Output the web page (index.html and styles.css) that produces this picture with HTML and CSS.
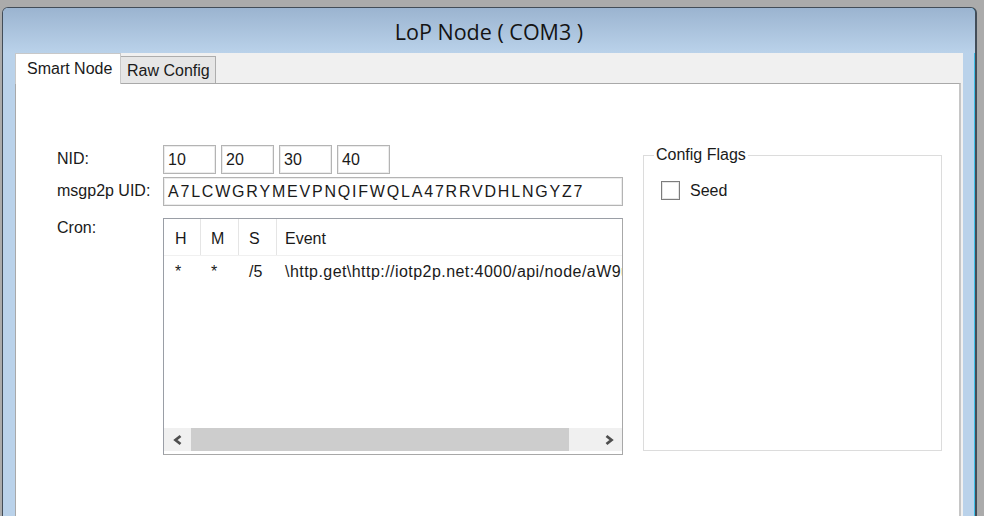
FILE: index.html
```
<!DOCTYPE html>
<html>
<head>
<meta charset="utf-8">
<link rel="stylesheet" href="styles.css">
</head>
<body>
<div class="window">
  <div class="titlebar"><span class="title">LoP Node ( COM3 )</span></div>
  <div class="client">
    <div class="tabs">
      <div class="tab tab-active">Smart Node</div>
      <div class="tab tab-idle">Raw Config</div>
    </div>
    <div class="page">
      <div class="form">
        <div class="lbl">NID:</div>
        <div class="nid">
          <div class="tb tb-nid">10</div>
          <div class="tb tb-nid">20</div>
          <div class="tb tb-nid">30</div>
          <div class="tb tb-nid">40</div>
        </div>
        <div class="lbl">msgp2p UID:</div>
        <div class="tb tb-uid">A7LCWGRYMEVPNQIFWQLA47RRVDHLNGYZ7</div>
        <div class="lbl lbl-cron">Cron:</div>
        <div class="list">
          <div class="lv-head">
            <div class="col col-h">H</div>
            <div class="col col-m">M</div>
            <div class="col col-s">S</div>
            <div class="col col-e">Event</div>
          </div>
          <div class="lv-row">
            <div class="col col-h cell">*</div>
            <div class="col col-m cell">*</div>
            <div class="col col-s cell">/5</div>
            <div class="col col-e cell cell-event">\http.get\http://iotp2p.net:4000/api/node/aW9ub2RlL2xvcA</div>
          </div>
          <div class="lv-fill"></div>
          <div class="hscroll">
            <div class="sb-btn">
              <svg width="12" height="12" viewBox="0 0 12 12"><polyline points="8.5,2 3.5,6 8.5,10" fill="none" stroke="#4e4e4e" stroke-width="2.8"/></svg>
            </div>
            <div class="sb-track"><div class="sb-thumb"></div></div>
            <div class="sb-btn">
              <svg width="12" height="12" viewBox="0 0 12 12"><polyline points="3.5,2 8.5,6 3.5,10" fill="none" stroke="#4e4e4e" stroke-width="2.8"/></svg>
            </div>
          </div>
        </div>
      </div>
      <fieldset class="group">
        <legend class="group-caption">Config Flags</legend>
        <div class="check"><span class="check-box"></span><span>Seed</span></div>
      </fieldset>
    </div>
  </div>
</div>
</body>
</html>
```
FILE: styles.css
```
html, body {
  margin: 0;
  padding: 0;
}
body {
  width: 984px;
  height: 516px;
  overflow: hidden;
  background: #ababab;
  font-family: "Liberation Sans", Arial, sans-serif;
  font-size: 16px;
  color: #1a1a1a;
}
.window {
  box-sizing: border-box;
  margin: 7px 0 0 2px;
  width: 975px;
  height: 530px;
  border: 1px solid #434d58;
  border-right-width: 2px;
  border-radius: 6px 6px 0 0;
  background: #bad2ea;
  box-shadow: inset -1px 0 0 #3fbfe8;
  display: flex;
  flex-direction: column;
}
.titlebar {
  height: 45px;
  flex: none;
  border-radius: 5px 5px 0 0;
  background: linear-gradient(#9bb4d0, #bad2ea);
  display: flex;
  align-items: center;
  justify-content: center;
}
.title {
  font-family: "Open Sans", "Noto Sans", sans-serif;
  font-size: 21.5px;
  color: #141414;
  padding-top: 2px;
}
.client {
  margin: 0 12px 0 12px;
  width: 948px;
  flex: 1;
  background: #f0f0f0;
}
.tabs {
  display: flex;
  align-items: flex-end;
  height: 30px;
  position: relative;
  z-index: 1;
}
.tab {
  box-sizing: border-box;
  white-space: nowrap;
}
.tab-active {
  width: 106px;
  height: 31px;
  margin-bottom: -1px;
  background: #fff;
  border: 1px solid #c8c8c8;
  border-bottom: none;
  padding: 6px 0 0 11px;
}
.tab-idle {
  width: 95px;
  height: 27px;
  background: #e6e6e6;
  border: 1px solid #adadad;
  border-bottom: none;
  border-left: none;
  padding: 5px 0 0 6px;
}
.page {
  box-sizing: border-box;
  width: 946px;
  height: 450px;
  background: #fff;
  border: 1px solid #a9a9a9;
  border-right: 2px solid #c6c6c6;
  padding: 61px 0 0 41px;
  display: flex;
  align-items: flex-start;
}
.form {
  display: grid;
  grid-template-columns: 106px 460px;
  grid-template-rows: 29px 29px auto;
  row-gap: 3px;
}
.lbl {
  display: flex;
  align-items: center;
  white-space: nowrap;
  padding-bottom: 2px;
}
.lbl-cron {
  align-items: flex-start;
  padding-top: 10px;
}
.nid {
  display: flex;
  gap: 5px;
}
.tb {
  box-sizing: border-box;
  height: 29px;
  border: 1px solid #b4b4b4;
  box-shadow: inset 0 0 0 1px #ececec;
  padding: 0 0 0 4px;
  display: flex;
  align-items: center;
  white-space: nowrap;
  overflow: hidden;
}
.tb-nid {
  width: 53px;
}
.tb-uid {
  width: 460px;
  letter-spacing: 1.8px;
}
.list {
  margin-top: 9px;
  box-sizing: border-box;
  width: 460px;
  height: 237px;
  border: 1px solid #9a9ea6;
  border-right-color: #a8a8a8;
  border-bottom-color: #a8a8a8;
  display: flex;
  flex-direction: column;
  overflow: hidden;
}
.lv-head {
  height: 37px;
  flex: none;
  display: flex;
  border-bottom: 1px solid #f0f0f0;
  box-sizing: border-box;
}
.lv-row {
  height: 28px;
  flex: none;
  display: flex;
}
.col {
  box-sizing: border-box;
  flex: none;
  display: flex;
  align-items: center;
  white-space: nowrap;
  overflow: hidden;
}
.lv-head .col {
  border-right: 1px solid #e5e5e5;
  padding-top: 3px;
}
.lv-head .col-e {
  border-right: none;
}
.col-h { width: 37px; padding-left: 11px; }
.col-m { width: 38px; padding-left: 10px; }
.col-s { width: 38px; padding-left: 10px; }
.col-e { flex: 1; padding-left: 8px; }
.cell {
  padding-top: 3px;
}
.cell-event {
  letter-spacing: 0.45px;
}
.lv-fill {
  flex: 1;
}
.hscroll {
  height: 23px;
  flex: none;
  margin-bottom: 3px;
  display: flex;
  background: #f0f0f0;
}
.sb-btn {
  width: 27px;
  display: flex;
  align-items: center;
  justify-content: center;
  flex: none;
}
.sb-track {
  flex: 1;
  display: flex;
  align-items: stretch;
}
.sb-thumb {
  width: 378px;
  background: #cdcdcd;
}
.group {
  box-sizing: border-box;
  margin: 1px 0 0 20px;
  width: 299px;
  height: 305px;
  border: 1px solid #dcdcdc;
  padding: 0 0 0 10px;
  min-width: 0;
}
.group-caption {
  padding: 0 2px;
  line-height: 18px;
}
.check {
  display: flex;
  align-items: center;
  gap: 10px;
  margin: 17px 0 0 7px;
}
.check-box {
  box-sizing: border-box;
  width: 19px;
  height: 19px;
  border: 1px solid #7c7c7c;
  box-shadow: inset 0 0 0 1px #e6e6e6;
  background: #fff;
}
```
